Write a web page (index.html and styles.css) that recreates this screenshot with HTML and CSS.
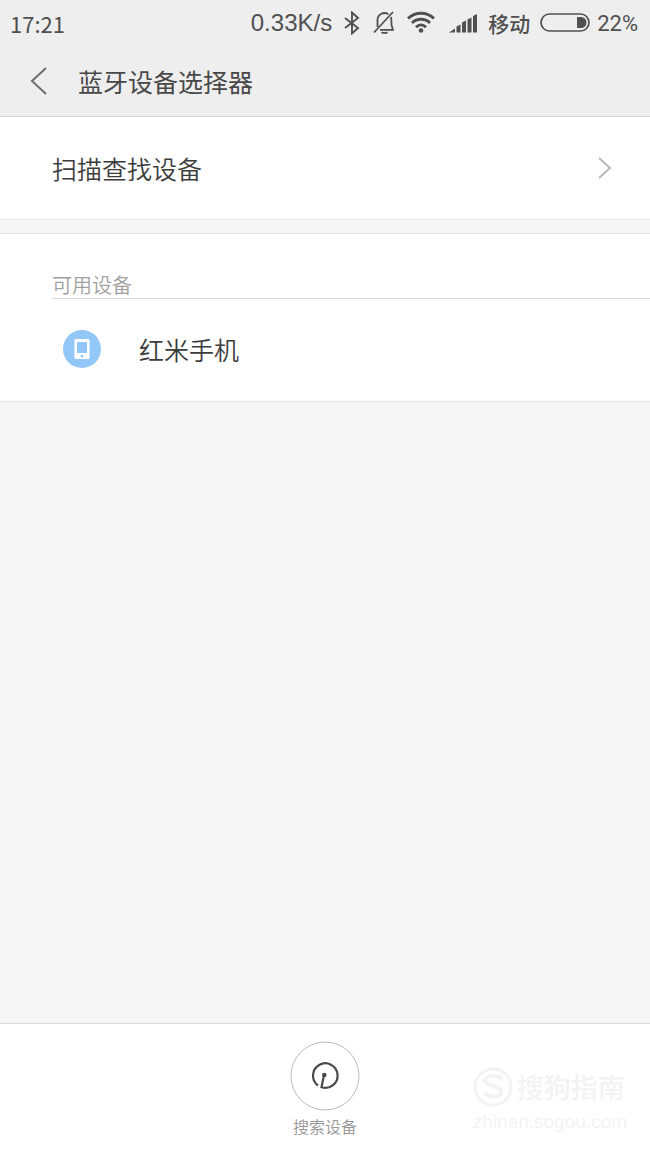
FILE: index.html
```html
<!DOCTYPE html>
<html lang="zh-CN">
<head>
<meta charset="utf-8">
<meta name="viewport" content="width=device-width, initial-scale=1">
<title>蓝牙设备选择器</title>
<link rel="stylesheet" href="styles.css">
</head>
<body>
<div class="screen">
  <header class="top">
    <div class="status">
      <span class="clock">17:21</span>
      <span class="speed">0.33K/s</span>
      <svg class="bluetooth" width="16" height="24" viewBox="0 0 16 24" fill="none" stroke="currentColor" stroke-width="1.900"><path d="M1 7l13 10-6 5.500V1.500l6 5.500L1 17"/></svg>
      <svg class="bell" width="22" height="24" viewBox="0 0 22 24" fill="none" stroke="currentColor" stroke-width="1.800"><path d="M1 21.500L20 1M15.500 3.200C10 0 4.500 4 4.500 9v7M18 6c.5 2 .5 5 .5 8l1.500 4.800H7M8.500 21.200c1.500 1.200 4.500 1.200 6 0"/></svg>
      <svg class="wifi" width="28" height="24" viewBox="0 0 28 24" fill="none" stroke="currentColor" stroke-width="2.900"><path d="M1 7.500C8 .5 20 .5 27 7.500M5 12c5-5 13-5 18 0M9 16.300c3-3 7-3 10 0"/><circle cx="14" cy="19.500" r="2.300" fill="currentColor" stroke="none"/></svg>
      <svg class="signal" width="28" height="24" viewBox="0 0 28 24" fill="currentColor"><path d="M0 21.500l6-4v4zM7.500 21.500v-6l4-2v8zM13 21.500V11.500l4-2v12zM18.500 21.500V8.500l4-2v15zM24 21.500V5l4-2v18.500z"/></svg>
      <span class="carrier">移动</span>
      <svg class="battery" width="51" height="24" viewBox="0 0 51 24"><rect x="1" y="3" width="48" height="17" rx="8.500" fill="none" stroke="currentColor" stroke-width="1.700"/><path d="M37 6h4a5.500 5.500 0 0 1 0 11h-4z" fill="currentColor"/></svg>
      <span class="percent">22%</span>
    </div>
    <div class="titlebar">
      <button class="back" type="button" aria-label="返回"><svg width="18" height="28" viewBox="0 0 18 28" fill="none" stroke="#6e6e6e" stroke-width="2"><path d="M16 1L2 14l14 13"/></svg></button>
      <h1 class="title">蓝牙设备选择器</h1>
    </div>
  </header>
  <main class="content">
    <button class="scan" type="button">
      <span>扫描查找设备</span>
      <svg width="14" height="24" viewBox="0 0 14 24" fill="none" stroke="#b9b9b9" stroke-width="2"><path d="M1 2l11 10L1 22"/></svg>
    </button>
    <section class="available">
      <h2 class="label">可用设备</h2>
      <button class="device" type="button">
        <svg width="38" height="38" viewBox="0 0 38 38"><circle cx="19" cy="19" r="19" fill="#93c7f8"/><rect x="11.500" y="9" width="15" height="20" rx="1.500" fill="#fff"/><path d="M14 12h10v11H14z" fill="#93c7f8"/><circle cx="19" cy="26" r="1.500" fill="#93c7f8"/></svg>
        <span>红米手机</span>
      </button>
    </section>
  </main>
  <footer class="bottom">
    <button class="search" type="button">
      <svg width="70" height="70" viewBox="0 0 70 70" fill="none"><circle cx="35" cy="35" r="34" stroke="#bdbdbd"/><path d="M28 44.500A12.300 12.300 0 1 1 31.500 46.300L34 34" stroke="#4a4a4a" stroke-width="2.200"/><circle cx="34.300" cy="34" r="2.300" fill="#4a4a4a"/></svg>
      <span>搜索设备</span>
    </button>
    <div class="watermark">
      <div class="brand">
        <svg width="40" height="40" viewBox="0 0 40 40" fill="none" stroke="currentColor"><circle cx="20" cy="20" r="18" stroke-width="3"/><path d="M29 12c-5-4-16-4-17 1-1 6 16 5 16 12 0 5-11 6-17 1" stroke-width="4"/></svg>
        <span>搜狗指南</span>
      </div>
      <span class="site">zhinan.sogou.com</span>
    </div>
  </footer>
</div>
</body>
</html>
```
FILE: styles.css
```css
* { box-sizing: border-box; }
body {
  margin: 0;
  background: #f6f6f6;
  color: #3c3c3c;
  font-family: "Noto Sans CJK SC", sans-serif;
}
button {
  margin: 0;
  padding: 0;
  border: 0;
  background: none;
  color: inherit;
  font: inherit;
  cursor: pointer;
}
svg { display: block; flex: none; }
.screen {
  display: flex;
  flex-direction: column;
  min-height: 100vh;
}
.top {
  background: #eee;
  border-bottom: 1px solid #d2d2d2;
  color: #505050;
}
.status {
  display: flex;
  align-items: center;
  height: 46px;
  padding: 0 12px 0 10px;
}
.clock { margin-right: auto; font-size: 22px; }
.speed {
  margin-right: 12px;
  font-family: "Liberation Sans", Arial, sans-serif;
  font-size: 24px;
}
.bluetooth { margin-right: 13px; }
.bell { margin-right: 12px; }
.wifi { margin-right: 14px; }
.signal { margin-right: 11px; }
.carrier { margin-right: 10px; font-size: 21px; font-weight: 500; }
.battery { margin-right: 6px; }
.percent { font-family: Roboto, sans-serif; font-size: 22px; }
.titlebar {
  display: flex;
  align-items: center;
  height: 70px;
  padding-left: 30px;
}
.back { padding-right: 30px; }
.title {
  margin: 0;
  font-size: 25px;
  font-weight: 400;
  line-height: 38px;
  color: #484848;
}
.content { flex: 1; }
.scan {
  display: flex;
  align-items: center;
  justify-content: space-between;
  width: 100%;
  height: 103px;
  padding: 0 38px 0 52px;
  border-bottom: 1px solid #e6e6e6;
  background: #fff;
  font-size: 25px;
  font-weight: 350;
}
.available {
  margin-top: 13px;
  padding-left: 52px;
  border-top: 1px solid #e6e6e6;
  border-bottom: 1px solid #e6e6e6;
  background: #fff;
}
.label {
  margin: 0;
  padding-top: 38px;
  border-bottom: 1px solid #dcdcdc;
  color: #a0a0a0;
  font-size: 20px;
  font-weight: 350;
  line-height: 26px;
}
.device {
  display: flex;
  align-items: center;
  gap: 38px;
  width: 100%;
  height: 102px;
  padding: 0 0 2px 11px;
  font-size: 25px;
  font-weight: 350;
}
.bottom {
  position: relative;
  display: flex;
  justify-content: center;
  padding: 17px 0;
  border-top: 1px solid #dcdcdc;
  background: #fff;
}
.search {
  display: flex;
  flex-direction: column;
  align-items: center;
  gap: 3px;
  color: #969696;
  font-size: 16px;
  font-weight: 350;
  line-height: 24px;
}
.watermark {
  position: absolute;
  right: 23px;
  bottom: 20px;
  display: flex;
  flex-direction: column;
  align-items: flex-start;
  color: #f3f3f3;
}
.brand {
  display: flex;
  align-items: center;
  gap: 4px;
  font-size: 27px;
  font-weight: 500;
  line-height: 44px;
}
.site {
  font-family: "Liberation Sans", Arial, sans-serif;
  font-size: 19px;
  line-height: 26px;
}
```
